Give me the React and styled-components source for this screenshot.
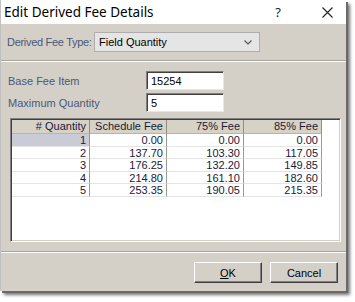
import React from "react";
import styled, { createGlobalStyle } from "styled-components";

const Global = createGlobalStyle`
  html, body { margin: 0; padding: 0; background: #ffffff; }
  * { box-sizing: border-box; }
`;

const Page = styled.div`
  width: 355px;
  height: 302px;
  background: #ffffff;
`;

const Dialog = styled.div`
  width: 346px;
  height: 291px;
  background: #d4d0c8;
  display: flex;
  flex-direction: column;
  box-shadow: 2px 2px 0 #6a6a6a, 4px 4px 3px rgba(0,0,0,0.55);
  font-family: "Liberation Sans", Tahoma, sans-serif;
  font-size: 11px;
  border-left: 1px solid #c0c0c0;
`;

const TitleBar = styled.div`
  height: 24px;
  background: #ffffff;
  display: flex;
  align-items: center;
  padding-left: 3px;
  flex-shrink: 0;
`;

const Title = styled.div`
  font-family: "Noto Sans", "Open Sans", sans-serif;
  font-size: 13.5px;
  color: #000;
  flex: 1;
`;

const Help = styled.div`
  width: 20px;
  text-align: center;
  font-family: "Noto Sans", sans-serif;
  font-size: 13px;
  color: #222;
  margin-right: 33px;
`;

const Close = styled.div`
  width: 12px;
  height: 12px;
  margin-right: 13px;
  display: flex;
  align-items: center;
  justify-content: center;
`;

const TypeRow = styled.div`
  display: flex;
  align-items: center;
  margin-top: 8px;
  padding-left: 6px;
  height: 20px;
`;

const Label = styled.div`
  color: #4a5878;
  width: ${p => p.$w}px;
  flex-shrink: 0;
  white-space: nowrap;
  letter-spacing: ${p => (p.$tight ? "-0.3px" : "0")};
`;

const Combo = styled.div`
  width: 166px;
  height: 20px;
  background: #e5e5e5;
  border: 1px solid #adadad;
  display: flex;
  align-items: center;
  padding-left: 4px;
  color: #000;
`;

const ComboText = styled.div`
  flex: 1;
`;

const Chevron = styled.div`
  width: 14px;
  margin-right: 4px;
  display: flex;
  justify-content: center;
`;

const Separator = styled.div`
  margin-top: ${p => p.$mt}px;
  height: 2px;
  border-top: 1px solid #a8a59e;
  border-bottom: 1px solid #ffffff;
  flex-shrink: 0;
`;

const Fields = styled.div`
  margin-top: 9px;
  display: flex;
  flex-direction: column;
  gap: 3px;
  padding-left: 7px;
`;

const FieldRow = styled.div`
  display: flex;
  align-items: center;
  height: 19px;
`;

const Input = styled.div`
  width: 78px;
  height: 19px;
  background: #ffffff;
  border-top: 1px solid #808080;
  border-left: 1px solid #808080;
  border-right: 1px solid #e8e8e8;
  border-bottom: 1px solid #e8e8e8;
  box-shadow: inset 1px 1px 0 #404040;
  padding-left: 4px;
  display: flex;
  align-items: center;
  color: #000;
`;

const GridBox = styled.div`
  margin-top: 6px;
  margin-left: 9px;
  width: 331px;
  height: 124px;
  background: #ffffff;
  border-top: 1px solid #808080;
  border-left: 1px solid #808080;
  border-right: 1px solid #ffffff;
  border-bottom: 1px solid #ffffff;
  box-shadow: inset 1px 1px 0 #404040, inset -1px -1px 0 #d4d0c8;
  padding: 1px;
`;

const Table = styled.div`
  display: grid;
  grid-template-columns: 78px 77px 77px 78px;
  width: 310px;
`;

const HeadCell = styled.div`
  height: 14px;
  background: #d6d3c6;
  border-right: 1px solid #8f8d86;
  border-bottom: 1px solid #b8b5a8;
  text-align: right;
  padding-right: 3px;
  line-height: 13px;
  color: #1a1a3a;
`;

const Cell = styled.div`
  height: 12.5px;
  line-height: 12px;
  text-align: right;
  padding-right: 3px;
  color: #1a1a3a;
  background: ${p => (p.$sel ? "#c9ccd6" : "#ffffff")};
  border-right: 1px solid #9a9890;
  border-bottom: 1px solid #e4e4e4;
`;

const Spacer = styled.div`
  flex: 1;
`;

const ButtonRow = styled.div`
  display: flex;
  justify-content: flex-end;
  gap: 8px;
  padding-right: 8px;
  margin-top: 8px;
  margin-bottom: 8px;
`;

const Button = styled.div`
  width: 68px;
  height: 21px;
  background: #d4d0c8;
  border-top: 1px solid #ffffff;
  border-left: 1px solid #ffffff;
  border-right: 1px solid #404040;
  border-bottom: 1px solid #404040;
  box-shadow: inset -1px -1px 0 #808080;
  display: flex;
  align-items: center;
  justify-content: center;
  color: #000;
  font-size: 11px;
`;

const U = styled.span`
  text-decoration: underline;
`;

const rows = [
  ["1", "0.00", "0.00", "0.00"],
  ["2", "137.70", "103.30", "117.05"],
  ["3", "176.25", "132.20", "149.85"],
  ["4", "214.80", "161.10", "182.60"],
  ["5", "253.35", "190.05", "215.35"],
];

export default function App() {
  return (
    <Page>
      <Global />
      <Dialog>
        <TitleBar>
          <Title>Edit Derived Fee Details</Title>
          <Help>?</Help>
          <Close>
            <svg width="11" height="11" viewBox="0 0 11 11">
              <path d="M0.5 0.5 L10.5 10.5 M10.5 0.5 L0.5 10.5" stroke="#222" strokeWidth="1.1" />
            </svg>
          </Close>
        </TitleBar>
        <TypeRow>
          <Label $w={87} $tight>Derived Fee Type:</Label>
          <Combo>
            <ComboText>Field Quantity</ComboText>
            <Chevron>
              <svg width="8" height="5" viewBox="0 0 8 5">
                <path d="M0.5 0.5 L4 4 L7.5 0.5" stroke="#555" strokeWidth="1.2" fill="none" />
              </svg>
            </Chevron>
          </Combo>
        </TypeRow>
        <Separator $mt={8} />
        <Fields>
          <FieldRow>
            <Label $w={138}>Base Fee Item</Label>
            <Input>15254</Input>
          </FieldRow>
          <FieldRow>
            <Label $w={138}>Maximum Quantity</Label>
            <Input>5</Input>
          </FieldRow>
        </Fields>
        <GridBox>
          <Table>
            <HeadCell># Quantity</HeadCell>
            <HeadCell>Schedule Fee</HeadCell>
            <HeadCell>75% Fee</HeadCell>
            <HeadCell>85% Fee</HeadCell>
            {rows.map((r, i) =>
              r.map((v, j) => (
                <Cell key={`${i}-${j}`} $sel={i === 0 && j === 0}>
                  {v}
                </Cell>
              ))
            )}
          </Table>
        </GridBox>
        <Separator $mt={9} />
        <Spacer />
        <ButtonRow>
          <Button>
            <U>O</U>K
          </Button>
          <Button>Cancel</Button>
        </ButtonRow>
      </Dialog>
    </Page>
  );
}
